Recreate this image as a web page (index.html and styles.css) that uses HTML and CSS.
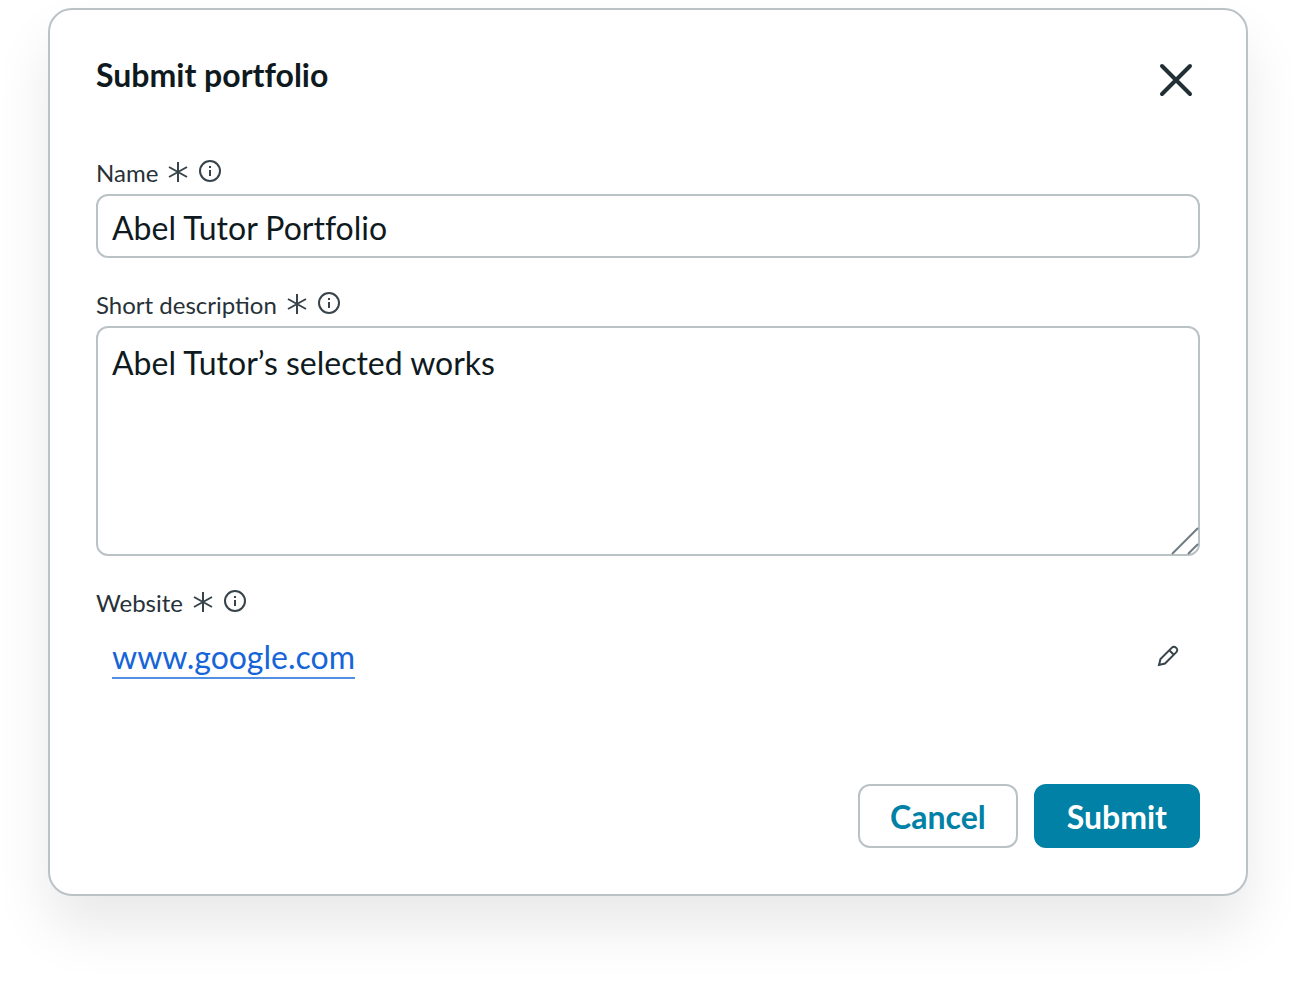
FILE: index.html
```
<!DOCTYPE html>
<html lang="en">
<head>
<meta charset="utf-8">
<meta name="viewport" content="width=device-width, initial-scale=1">
<title>Submit portfolio</title>
<link rel="stylesheet" href="styles.css">
</head>
<body>
<svg class="sprite" aria-hidden="true">
  <symbol id="required" viewBox="0 0 24 24"><path d="M12 2v20M3 7l18 10M21 7L3 17"/></symbol>
  <symbol id="info" viewBox="0 0 24 24"><circle cx="12" cy="11" r="10"/><path d="M12 10v6M12 6v2"/></symbol>
</svg>
<form class="dialog" role="dialog" aria-labelledby="title">
  <header class="dialog-header">
    <h1 class="title" id="title">Submit portfolio</h1>
    <button class="icon-button close" type="button" aria-label="Close">
      <svg viewBox="0 0 48 48" width="48" height="48"><path d="M10 10l28 28M38 10L10 38"/></svg>
    </button>
  </header>
  <div class="fields">
    <div class="field">
      <div class="label-row">
        <label for="name">Name</label>
        <svg class="icon"><use href="#required"/></svg>
        <svg class="icon"><use href="#info"/></svg>
      </div>
      <input class="control" id="name" type="text" value="Abel Tutor Portfolio" required>
    </div>
    <div class="field">
      <div class="label-row">
        <label for="description">Short description</label>
        <svg class="icon"><use href="#required"/></svg>
        <svg class="icon"><use href="#info"/></svg>
      </div>
      <div class="area-wrap">
        <textarea class="control area" id="description" required>Abel Tutor’s selected works</textarea>
        <svg class="grip" viewBox="0 0 28 28" width="28" height="28" aria-hidden="true"><path d="M1 27L27 1M17 27L27 17"/></svg>
      </div>
    </div>
    <div class="field">
      <div class="label-row">
        <span>Website</span>
        <svg class="icon"><use href="#required"/></svg>
        <svg class="icon"><use href="#info"/></svg>
      </div>
      <div class="link-row">
        <a class="link" href="#">www.google.com</a>
        <button class="icon-button edit" type="button" aria-label="Edit website">
          <svg viewBox="0 0 24 24" width="24" height="24"><path d="M3 21l1.500-6L15.900 3.600a2.800 2.800 0 0 1 4 0l.500.500a2.800 2.800 0 0 1 0 4L9 19.500zM13.300 6.200l4.500 4.500"/></svg>
        </button>
      </div>
    </div>
  </div>
  <footer class="actions">
    <button class="button secondary" type="button">Cancel</button>
    <button class="button primary" type="submit">Submit</button>
  </footer>
</form>
</body>
</html>
```
FILE: styles.css
```
* {
  box-sizing: border-box;
}

body {
  margin: 0;
  padding: 8px 48px 88px;
  background: #fff;
  color: #0f1a1e;
  font-family: Lato, "Liberation Sans", sans-serif;
  font-size: 32px;
  line-height: 40px;
}

.sprite {
  display: none;
}

svg {
  fill: none;
  stroke: currentColor;
  stroke-width: 2;
}

.dialog {
  padding: 46px;
  border: 2px solid #bbc2c6;
  border-radius: 24px;
  background: #fff;
  box-shadow: 0 32px 56px rgba(0, 0, 0, 0.09);
}

.dialog-header {
  display: flex;
  justify-content: space-between;
  align-items: flex-start;
  margin-bottom: 52px;
}

.title {
  margin: 0;
  font-size: 32px;
  font-weight: 700;
  line-height: 38px;
  font-variant-ligatures: none;
}

.icon-button {
  display: flex;
  padding: 0;
  border: 0;
  background: none;
  cursor: pointer;
}

.close {
  color: #222f35;
}

.close svg {
  stroke-width: 4;
  stroke-linecap: round;
}

.fields {
  display: grid;
  gap: 30px;
}

.field {
  display: grid;
  gap: 4px;
}

.label-row {
  display: flex;
  align-items: center;
  gap: 8px;
  color: #273238;
  font-size: 24px;
  line-height: 34px;
}

.icon {
  width: 24px;
  height: 24px;
  margin-bottom: 2px;
  color: #37444b;
}

.control {
  display: block;
  width: 100%;
  height: 64px;
  padding: 2px 14px 0;
  border: 2px solid #bbc2c6;
  border-radius: 12px;
  background: #fff;
  color: inherit;
  font: inherit;
  font-variant-ligatures: none;
}

.area-wrap {
  position: relative;
}

.area {
  height: 230px;
  padding: 15px 14px;
  resize: none;
}

.grip {
  position: absolute;
  right: 1px;
  bottom: 1px;
  color: #6f7c84;
  pointer-events: none;
}

.link-row {
  display: flex;
  justify-content: space-between;
  align-items: center;
  height: 64px;
  padding: 0 20px 0 16px;
}

.link {
  padding-top: 4px;
  border-bottom: 2px solid #538ee5;
  color: #1665d8;
  text-decoration: none;
}

.edit {
  color: #37444b;
}

.actions {
  display: flex;
  justify-content: flex-end;
  gap: 16px;
  margin-top: 96px;
}

.button {
  height: 64px;
  padding: 2px 30px 0;
  border: 2px solid #bbc2c6;
  border-radius: 12px;
  background: #fff;
  color: #0081a5;
  font: inherit;
  font-weight: 700;
  cursor: pointer;
}

.primary {
  padding: 2px 31px 0;
  border-color: #0081a5;
  background: #0081a5;
  color: #fff;
}
```
